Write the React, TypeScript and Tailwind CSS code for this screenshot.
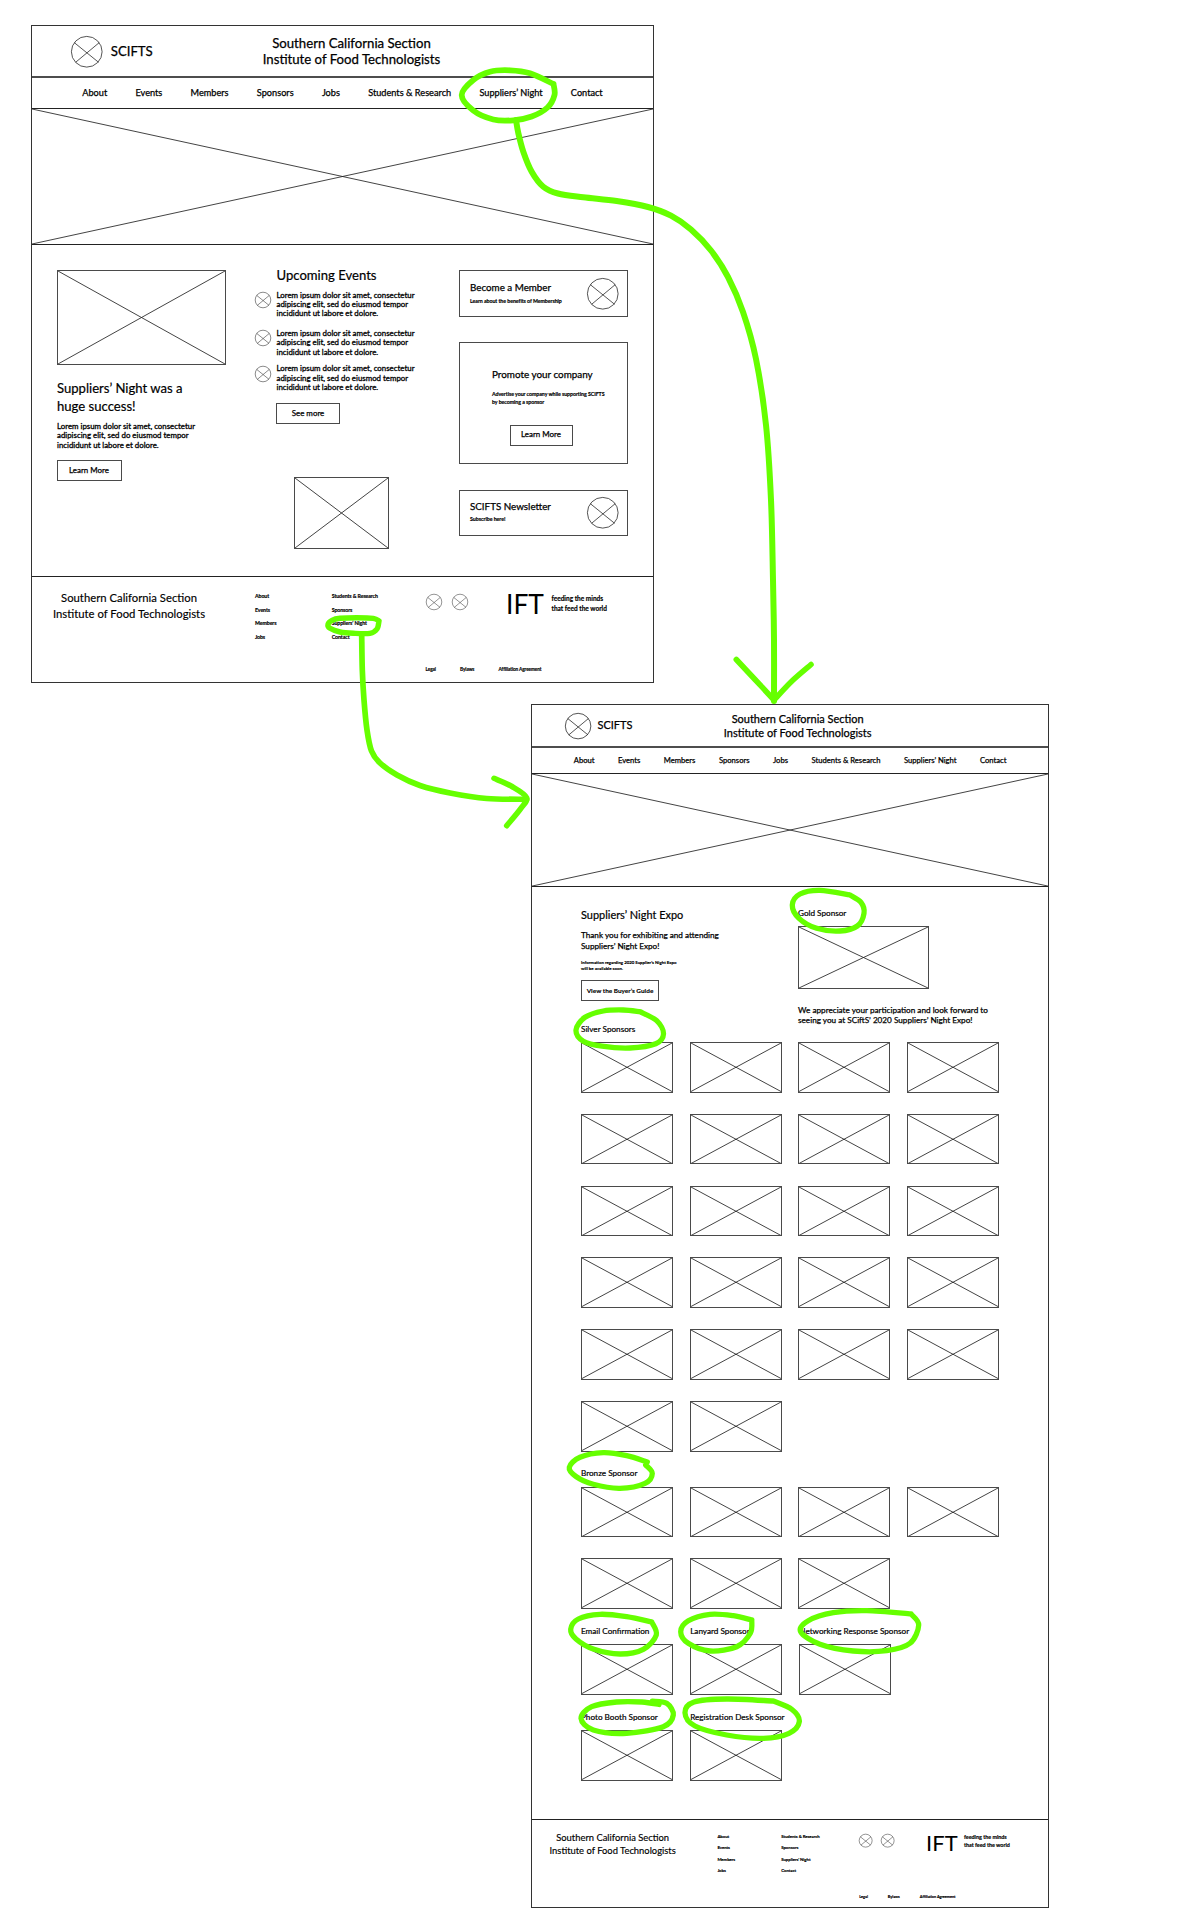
import React from "react";

/* Image placeholder: a thin frame with both diagonals. */
function Cross() {
  return (
    <svg className="block h-full w-full" viewBox="0 0 100 100" preserveAspectRatio="none">
      <path d="M0 0L100 100M100 0L0 100" stroke="#222" strokeWidth="0.85" vectorEffect="non-scaling-stroke" fill="none" />
    </svg>
  );
}

function Placeholder({ className }: { className: string }) {
  return (
    <div className={`shrink-0 border border-[#4a4a4a] ${className}`}>
      <Cross />
    </div>
  );
}

/* Round icon placeholder. */
function Dot({ className, stroke = 0.8 }: { className: string; stroke?: number }) {
  return (
    <svg className={`block shrink-0 overflow-visible ${className}`} viewBox="-16 -16 32 32" fill="none" stroke="#2a2a2a">
      <circle r="15.6" strokeWidth={stroke} vectorEffect="non-scaling-stroke" />
      <path d="M-12.7-9.3L12 10.7M12.7-9.3L-11.3 10.7" strokeWidth={stroke} vectorEffect="non-scaling-stroke" />
    </svg>
  );
}

function Button({ className, children }: { className: string; children: React.ReactNode }) {
  return (
    <button className={`flex h-21 shrink-0 items-center justify-center border border-[#4a4a4a] whitespace-nowrap ${className}`}>
      {children}
    </button>
  );
}

const NAV = ["About", "Events", "Members", "Sponsors", "Jobs", "Students & Research", "Suppliers’ Night", "Contact"];

function Top() {
  return (
    <>
      <header className="flex h-52 items-start border-b-2 border-[#4d4d4d] text-[length:calc(13.2*var(--spacing))] [-webkit-text-stroke:0.25px]">
        <Dot className="mt-9.75 ml-39.25 size-31.5" />
        <div className="mt-15.75 ml-8 w-43 leading-18">SCIFTS</div>
        <div className="mt-9 ml-107.75 w-180 text-center leading-16 whitespace-nowrap">
          Southern California Section
          <br />
          Institute of Food Technologists
        </div>
      </header>
      <nav className="flex h-31 gap-28.25 border-b border-[#222] pl-50.25 text-[length:calc(9.18*var(--spacing))] leading-29 whitespace-nowrap [-webkit-text-stroke:0.25px]">
        {NAV.map((n) => (
          <a key={n}>{n}</a>
        ))}
      </nav>
      <div className="h-136 border-b border-[#222]">
        <Cross />
      </div>
    </>
  );
}

function Links({ items, className }: { items: string[]; className: string }) {
  return (
    <ul className={`shrink-0 pt-12.75 text-[length:calc(5.25*var(--spacing))] leading-13.75 font-bold whitespace-nowrap [-webkit-text-stroke:0.15px] ${className}`}>
      {items.map((i) => (
        <li key={i}>{i}</li>
      ))}
    </ul>
  );
}

function Footer() {
  return (
    <footer className="flex h-106 border-t border-[#222]">
      <div className="ml-20 w-154 pt-12.75 text-center text-[length:calc(11.3*var(--spacing))] leading-16 whitespace-nowrap [-webkit-text-stroke:0.15px]">
        Southern California Section
        <br />
        Institute of Food Technologists
      </div>
      <Links className="ml-49 w-76.75 tracking-[-0.02em]" items={["About", "Events", "Members", "Jobs"]} />
      <Links className="w-93.75 tracking-[-0.02em]" items={["Students & Research", "Sponsors", "Suppliers’ Night", "Contact"]} />
      <div className="flex flex-col whitespace-nowrap">
        <div className="flex h-89 items-start">
          <Dot className="mt-17 size-16" stroke={0.5} />
          <Dot className="mt-17 ml-10.5 size-16" stroke={0.5} />
          <div className="mt-13.75 ml-38 w-45.5 text-[length:calc(26.4*var(--spacing))] leading-26">IFT</div>
          <div className="mt-17 text-[length:calc(6.5*var(--spacing))] leading-9.5 font-bold [-webkit-text-stroke:0.15px]">
            feeding the minds
            <br />
            that feed the world
          </div>
        </div>
        <div className="flex text-[length:calc(4.7*var(--spacing))] leading-6 font-bold tracking-[-0.02em] [-webkit-text-stroke:0.15px]">
          <span className="w-34.5">Legal</span>
          <span className="w-38.5">Bylaws</span>
          <span>Affiliation Agreement</span>
        </div>
      </div>
    </footer>
  );
}

const LOREM = (
  <>
    Lorem ipsum dolor sit amet, consectetur
    <br />
    adipiscing elit, sed do eiusmod tempor
    <br />
    incididunt ut labore et dolore.
  </>
);

function EventRow({ className }: { className: string }) {
  return (
    <div className={`flex h-28 items-start ${className}`}>
      <Dot className="mt-1.5 size-16" stroke={0.55} />
      <p className="ml-5.5 text-[7.86px] leading-[9.4px] whitespace-nowrap [-webkit-text-stroke:0.3px]">{LOREM}</p>
    </div>
  );
}

function HomeBody() {
  return (
    <div className="flex h-331 items-start">
      <section className="ml-25 w-170 pt-25">
        <Placeholder className="h-95 w-169" />
        <h2 className="mt-14 text-[13.1px] leading-18 [-webkit-text-stroke:0.2px]">
          Suppliers’ Night was a<br />
          huge success!
        </h2>
        <p className="mt-7 h-27 text-[7.86px] leading-[9.4px] whitespace-nowrap [-webkit-text-stroke:0.3px]">{LOREM}</p>
        <Button className="mt-11 w-65 pr-1 text-[7.95px] [-webkit-text-stroke:0.25px]">Learn More</Button>
      </section>
      <section className="ml-28 w-204 pt-21">
        <h2 className="ml-21.5 text-[13.1px] leading-18 [-webkit-text-stroke:0.2px]">Upcoming Events</h2>
        <EventRow className="mt-6.5" />
        <EventRow className="mt-10.25" />
        <EventRow className="mt-7.5" />
        <Button className="mt-10.75 ml-21 w-63.5 pl-0.5 text-[7.95px] [-webkit-text-stroke:0.25px]">See more</Button>
        <Placeholder className="mt-53 ml-39 h-72 w-95" />
      </section>
      <section className="w-169 pt-25">
        <div className="flex h-47 justify-between border border-[#4a4a4a] pl-10">
          <div className="pt-10 whitespace-nowrap">
            <h3 className="text-[9.8px] leading-12 [-webkit-text-stroke:0.25px]">Become a Member</h3>
            <p className="mt-4 text-[5.25px] leading-8 font-bold tracking-[-0.01em] [-webkit-text-stroke:0.15px]">Learn about the benefits of Membership</p>
          </div>
          <Dot className="mt-7 mr-9 size-31.5" />
        </div>
        <div className="mt-25 flex h-122 flex-col border border-[#4a4a4a] pt-25 pl-32 whitespace-nowrap">
          <h3 className="text-[9.9px] leading-12 [-webkit-text-stroke:0.25px]">Promote your company</h3>
          <p className="mt-10 text-[5.25px] leading-8 font-bold tracking-[-0.01em] [-webkit-text-stroke:0.15px]">
            Advertise your company while supporting SCIFTS
            <br />
            by becoming a sponsor
          </p>
          <Button className="mt-18.5 ml-17.5 w-63 text-[7.95px] [-webkit-text-stroke:0.25px]">Learn More</Button>
        </div>
        <div className="mt-26 flex h-46 justify-between border border-[#4a4a4a] pl-10">
          <div className="pt-9 whitespace-nowrap">
            <h3 className="text-[9.8px] leading-12 [-webkit-text-stroke:0.25px]">SCIFTS Newsletter</h3>
            <p className="mt-3 text-[5.3px] leading-8 font-bold tracking-[-0.01em] [-webkit-text-stroke:0.15px]">Subscribe here!</p>
          </div>
          <Dot className="mt-6 mr-9 size-31.5" />
        </div>
      </section>
    </div>
  );
}

function SponsorGrid({ count, className }: { count: number; className: string }) {
  return (
    <div className={`grid grid-cols-[repeat(4,92px)] gap-x-[16.67px] gap-y-[21.3px] ${className}`}>
      {Array.from({ length: count }, (_, i) => (
        <Placeholder key={i} className="h-50.5 w-92" />
      ))}
    </div>
  );
}

function Label({ className, children }: { className: string; children: React.ReactNode }) {
  return <h3 className={`text-[8.17px] leading-11 whitespace-nowrap [-webkit-text-stroke:0.2px] ${className}`}>{children}</h3>;
}

function LabeledRow({ labels, className }: { labels: string[]; className: string }) {
  return (
    <div className={`grid grid-cols-[repeat(4,92px)] gap-x-[16.67px] ${className}`}>
      {labels.map((l, i) => (
        <div key={l}>
          <Label className={i === 2 ? "ml-1" : i === 1 ? "ml-0.5" : ""}>{l}</Label>
          <Placeholder className={i === 2 ? "mt-7.25 ml-1 h-50.5 w-92" : "mt-7.25 h-50.5 w-92"} />
        </div>
      ))}
    </div>
  );
}

function ExpoBody() {
  return (
    <div className="h-932 pl-49 [--spacing:1px]">
      <div className="flex h-155 items-start whitespace-nowrap">
        <section className="w-217 pt-20.75">
          <h2 className="text-[10.95px] leading-14 [-webkit-text-stroke:0.2px]">Suppliers’ Night Expo</h2>
          <p className="mt-7.75 text-[8.17px] leading-11 [-webkit-text-stroke:0.25px]">
            Thank you for exhibiting and attending
            <br />
            Suppliers’ Night Expo!
          </p>
          <p className="mt-8.75 text-[4.35px] leading-6 font-bold [-webkit-text-stroke:0.15px]">
            Information regarding 2020 Supplier’s Night Expo
            <br />
            will be available soon.
          </p>
          <Button className="mt-7.75 w-78 text-[6.45px] font-bold [-webkit-text-stroke:0.1px]">View the Buyer’s Guide</Button>
          <Label className="mt-22.5">Silver Sponsors</Label>
        </section>
        <section className="pt-21.25">
          <Label className="">Gold Sponsor</Label>
          <Placeholder className="mt-7 h-63 w-131" />
          <p className="mt-16 text-[8.18px] leading-10 [-webkit-text-stroke:0.25px]">
            We appreciate your participation and look forward to
            <br />
            seeing you at SCiftS’ 2020 Suppliers’ Night Expo!
          </p>
        </section>
      </div>
      <SponsorGrid count={22} className="" />
      <Label className="mt-16">Bronze Sponsor</Label>
      <SponsorGrid count={7} className="mt-8" />
      <LabeledRow className="mt-17.25" labels={["Email Confirmation", "Lanyard Sponsor", "Networking Response Sponsor"]} />
      <LabeledRow className="mt-17.25" labels={["Photo Booth Sponsor", "Registration Desk Sponsor"]} />
    </div>
  );
}

type Pt = [number, number];

/* Smooth curve through hand-placed points (Catmull-Rom to Bézier). */
function smooth(p: Pt[]) {
  let d = `M${p[0][0]} ${p[0][1]}`;
  for (let i = 0; i < p.length - 1; i++) {
    const a = p[Math.max(0, i - 1)];
    const b = p[i];
    const c = p[i + 1];
    const e = p[Math.min(p.length - 1, i + 2)];
    d += `C${b[0] + (c[0] - a[0]) / 6} ${b[1] + (c[1] - a[1]) / 6} ${c[0] - (e[0] - b[0]) / 6} ${c[1] - (e[1] - b[1]) / 6} ${c[0]} ${c[1]}`;
  }
  return d;
}

const STROKES: { w: number; p: Pt[] }[] = [
  { w: 5.8, p: [[553.5, 84], [554.5, 95], [547.5, 107.5], [531.7, 116.5], [513.3, 120.3], [493.3, 119.5], [473.3, 110.5], [461.7, 95], [473.3, 80], [490, 71.7], [510, 70.3], [530, 73.3], [553.5, 84]] },
  { w: 6, p: [[516, 120], [518.3, 133], [523.3, 151.7], [531.7, 171.7], [543.3, 186.7], [558, 193.5], [583.3, 197.3], [616.7, 201], [648, 207], [671, 215.7], [691, 229.5], [711, 250.5], [728, 277], [743, 312], [756, 359], [766, 425], [771, 500], [773, 580], [774, 640], [774, 701]] },
  { w: 5.6, p: [[736.3, 659.5], [755, 679.5], [774, 700]] },
  { w: 5.6, p: [[811, 664.5], [792, 681], [774, 700]] },
  { w: 5.4, p: [[379, 621], [377, 629], [370, 633.3], [353.3, 633.3], [340, 632], [330, 628.3], [328, 624.3], [332, 620.3], [340, 618.3], [356.7, 617.7], [373.3, 618.3], [379, 621]] },
  { w: 5.7, p: [[361.7, 635], [362.3, 670], [364, 700], [367, 730], [371.5, 751], [380, 763], [397, 775], [420, 785.5], [450, 793], [486.7, 798.5], [526.7, 799.3]] },
  { w: 5.6, p: [[494, 778.3], [512, 786.5], [526.5, 797.5], [520.7, 808.7], [506.7, 825.7]] },
  { w: 5.3, p: [[850, 895], [861, 902.3], [864, 913.3], [857.3, 926], [840, 931], [816.7, 928.3], [799, 918.3], [792.3, 905], [800, 894], [820, 890.3], [850, 895]] },
  { w: 5.3, p: [[640, 1011.7], [656.7, 1020.7], [663.5, 1034], [655.7, 1043.8], [630, 1048], [602, 1046.2], [583.3, 1041.2], [576, 1030], [585, 1017.3], [603.3, 1011], [623.3, 1010], [640, 1011.7]] },
  { w: 5.3, p: [[645.7, 1465], [652.3, 1473.3], [645, 1483.3], [620, 1488.3], [593.3, 1484.3], [576, 1476.5], [569.3, 1467.3], [580, 1457.3], [603.3, 1452.7], [626.7, 1455.7], [647.3, 1462]] },
  { w: 5.3, p: [[651.7, 1622], [656.3, 1635], [643.3, 1649.3], [620, 1654], [593.3, 1649], [576, 1639], [570.7, 1629.3], [578.3, 1619], [600, 1614.3], [626.7, 1616.7], [651.7, 1622]] },
  { w: 5.3, p: [[751.8, 1620], [750.3, 1633.3], [736.7, 1646.7], [710, 1651], [688.3, 1643.3], [680.7, 1631.7], [688.3, 1620.7], [710, 1614.3], [733.3, 1615.7], [751.8, 1620]] },
  { w: 5.3, p: [[911, 1614], [918.7, 1625], [910, 1643.3], [886.7, 1650.7], [853.3, 1651], [820, 1644.3], [800.7, 1631.7], [808.3, 1620.7], [833.3, 1612.7], [866.7, 1610.7], [911, 1614]] },
  { w: 5.3, p: [[652.3, 1701.2], [666.7, 1703.3], [673.3, 1715], [663.3, 1726.7], [626.7, 1733.3], [593.3, 1730], [581, 1718.3], [591.7, 1706.7], [616.7, 1702], [642, 1702], [659, 1704.5]] },
  { w: 5.3, p: [[773.3, 1701], [792, 1709.5], [799.3, 1721.7], [789, 1733.3], [763.3, 1738.3], [726.7, 1735], [695, 1726], [685, 1713], [694, 1702], [726.7, 1699], [773.3, 1701]] },
];

export default function App() {
  return (
    <main className="relative h-[1920px] w-[1200px] overflow-hidden bg-white pt-[25px] font-['Lato',sans-serif] text-black">
      <article className="ml-[31px] h-[658px] w-[623px] border border-[#333] [--spacing:1px]">
        <Top />
        <HomeBody />
        <Footer />
      </article>
      <article className="mt-[21px] ml-[531px] h-[1204px] w-[518px] border border-[#333] [--spacing:0.8315px]">
        <Top />
        <ExpoBody />
        <Footer />
      </article>
      <svg className="pointer-events-none absolute inset-0" width="1200" height="1920" fill="none" stroke="#66ff00" strokeLinecap="round" strokeLinejoin="round">
        {STROKES.map((s, i) => (
          <path key={i} d={smooth(s.p)} strokeWidth={s.w} />
        ))}
      </svg>
    </main>
  );
}
